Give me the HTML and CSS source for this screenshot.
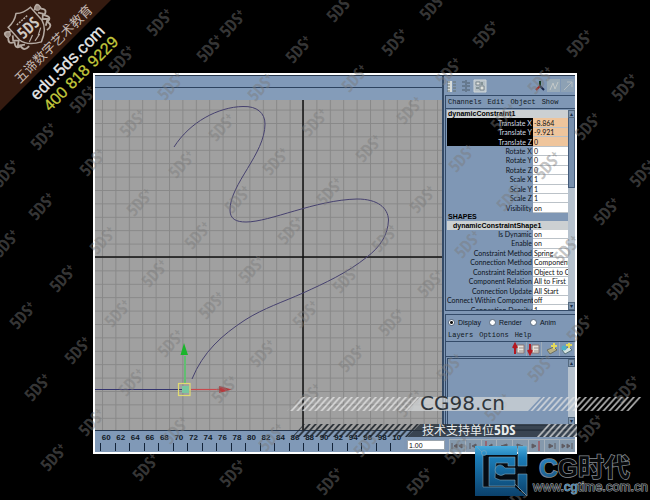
FILE: index.html
```html
<!DOCTYPE html>
<html lang="zh-CN">
<head>
<meta charset="utf-8">
<title>五谛数字艺术教育</title>
<link rel="stylesheet" href="styles.css">
</head>
<body>
<div class="stage">
  <main class="frame">
    <div class="workspace">
      <section class="view" aria-label="Viewport">
        <div class="view-menu"></div>
        <div class="view-tools"></div>
        <svg class="canvas" viewBox="95 100 347 330" preserveAspectRatio="none">
          <defs>
            <pattern id="grid" x="303" y="257" width="13.4" height="13.4" patternUnits="userSpaceOnUse">
              <path d="M.5 0V13.4M0 .5H13.4" fill="none" stroke="#828282" stroke-width="1"/>
            </pattern>
          </defs>
          <rect x="95" y="100" width="348" height="330" fill="#a0a0a0"/>
          <rect x="95" y="100" width="348" height="330" fill="url(#grid)" opacity=".8"/>
          <path d="M303 100V431" stroke="#111" stroke-width="1.500"/>
          <path d="M95 257H443" stroke="#111" stroke-width="1.500"/>
          <path d="M174 147C190 122 218 107 243 106.500C257 106 265 113 265 124C265 154 230 184 230 210C230 219 236 222 246 222C270 222 315 200 357 199C378 199 388 208 388.500 220C388 235 380 247 367 257C347 273 325 283 303 293C283 302 264 308 245 320C222 335 203 352 192 379" fill="none" stroke="#46416f" stroke-width="1"/>
          <path d="M95 389.500H184" stroke="#34346e" stroke-width="1.200"/>
          <path d="M185 356V384" stroke="#62bd72" stroke-width="2"/>
          <path d="M184 343L188 355H180.500Z" fill="#1ab52b"/>
          <path d="M191 389.500H220" stroke="#c8494c" stroke-width="1.200"/>
          <path d="M219 386L232 389.500L219 393Z" fill="#b8383c"/>
          <rect x="182" y="386" width="7" height="7" fill="#78c8a0"/>
          <rect x="178.500" y="383.500" width="11.500" height="12" fill="none" stroke="#e2dc70" stroke-width="1.200"/>
        </svg>
      </section>
      <aside class="side">
        <div class="tools">
          <svg class="tool" viewBox="0 0 14 14"><path d="M3 2H7V13H3Z" fill="#d6dbd9"/><path d="M2 3H5M2 6H5M2 9H5M2 12H5M8 3H11M8 6H11M8 9H11M8 12H11" stroke="#66706f"/></svg>
          <svg class="tool" viewBox="0 0 14 14"><path d="M3 3H6M3 7H6M3 11H6M7 1V13M8 4H11M8 7H11M8 11H11" stroke="#4f5c6b"/></svg>
          <svg class="tool" viewBox="0 0 14 14"><path d="M1 1H13V13H1Z" fill="#b4bfc6" stroke="#d0d6d8"/><path d="M3 3H7V6H3ZM7 7H11V11H7Z" fill="#dfe2de" stroke="#7b868e"/><path d="M3 9H6M9 3V6" stroke="#566"/></svg>
          <svg class="tool tool-right" viewBox="0 0 14 14"><path d="M7 2V7" stroke="#173d24" stroke-width="2"/><path d="M7 7L3 11" stroke="#a22b25" stroke-width="2"/><path d="M7 7L11 11" stroke="#17264c" stroke-width="2"/></svg>
          <svg class="tool" viewBox="0 0 14 14"><path d="M0 0H13V13H0Z" fill="#9aabb7"/><path d="M3 11L6 4L8 10L11 3" fill="none" stroke="#c2c8c8"/></svg>
          <svg class="tool" viewBox="0 0 14 14"><path d="M0 0H13V13H0Z" fill="#8da1b4"/><path d="M3 11L11 3M6 3H11V8" fill="none" stroke="#b3bcc2"/></svg>
        </div>
        <div class="panel">
          <nav class="menu"><a href="#c">Channels</a><a href="#e">Edit</a><a href="#o">Object</a><a href="#s">Show</a></nav>
          <div class="channels">
            <div class="table-clip">
              <table class="attrs">
                <colgroup><col class="label-col"><col></colgroup>
                <tbody>
                  <tr class="name"><th colspan="2">dynamicConstraint1</th></tr>
                  <tr class="picked"><th>Translate X</th><td>-8.864</td></tr>
                  <tr class="picked"><th>Translate Y</th><td>-9.921</td></tr>
                  <tr class="picked"><th>Translate Z</th><td>0</td></tr>
                  <tr><th>Rotate X</th><td>0</td></tr>
                  <tr><th>Rotate Y</th><td>0</td></tr>
                  <tr><th>Rotate Z</th><td>0</td></tr>
                  <tr><th>Scale X</th><td>1</td></tr>
                  <tr><th>Scale Y</th><td>1</td></tr>
                  <tr><th>Scale Z</th><td>1</td></tr>
                  <tr><th>Visibility</th><td>on</td></tr>
                  <tr class="heading"><th colspan="2">SHAPES</th></tr>
                  <tr class="name shape"><th colspan="2">dynamicConstraintShape1</th></tr>
                  <tr><th>Is Dynamic</th><td>on</td></tr>
                  <tr><th>Enable</th><td>on</td></tr>
                  <tr><th>Constraint Method</th><td>Spring</td></tr>
                  <tr><th>Connection Method</th><td>Component</td></tr>
                  <tr><th>Constraint Relation</th><td>Object to C</td></tr>
                  <tr><th>Component Relation</th><td>All to First</td></tr>
                  <tr><th>Connection Update</th><td>All Start</td></tr>
                  <tr><th>Connect Within Component</th><td>off</td></tr>
                  <tr><th>Connection Density</th><td>1</td></tr>
                </tbody>
              </table>
            </div>
            <div class="scroll"><span class="arrow">▴</span><span class="thumb"></span><span class="arrow end">▾</span></div>
          </div>
        </div>
        <div class="panel layers">
          <div class="modes">
            <label><input type="radio" name="mode" checked>Display</label>
            <label><input type="radio" name="mode">Render</label>
            <label><input type="radio" name="mode">Anim</label>
          </div>
          <nav class="menu"><a href="#l">Layers</a><a href="#p">Options</a><a href="#h">Help</a></nav>
          <div class="layer-tools">
            <button aria-label="Move layer up"><svg viewBox="0 0 14 14"><path d="M5 3H12V11H5Z" fill="#e6e2dc" stroke="#8b7474"/><path d="M7 6H12M7 9H12" stroke="#98908b"/><path d="M3 12V4M1 6L3 2L5 6" fill="none" stroke="#b41821" stroke-width="2"/></svg></button>
            <button aria-label="Move layer down"><svg viewBox="0 0 14 14"><path d="M5 3H12V11H5Z" fill="#e6e2dc" stroke="#8b7474"/><path d="M7 6H12M7 9H12" stroke="#98908b"/><path d="M3 2V10M1 8L3 12L5 8" fill="none" stroke="#b41821" stroke-width="2"/></svg></button>
            <button class="gap" aria-label="New layer"><svg viewBox="0 0 14 14"><path d="M2 8L9 5L12 8L5 12Z" fill="#b9b184" stroke="#6d7163"/><path d="M9 1V7M6 4H12" stroke="#e3d95a" stroke-width="2"/></svg></button>
            <button aria-label="New layer from selection"><svg viewBox="0 0 14 14"><path d="M2 8L9 5L12 8L5 12Z" fill="#d5e3df" stroke="#56727a"/><circle cx="4" cy="6" r="2.500" fill="#4db1c9"/><path d="M9 1V6M6 3H12" stroke="#e3d95a" stroke-width="2"/></svg></button>
          </div>
          <div class="layer-list"><div class="scroll"><span class="arrow">▴</span><span class="arrow end">▾</span></div></div>
        </div>
      </aside>
    </div>
    <footer class="timeline">
      <ol class="ruler" id="ruler"></ol>
      <input class="time" aria-label="Current time" value="1.00">
      <div class="transport">
        <button aria-label="Start"><svg viewBox="0 0 14 12"><path d="M2 3V9M7 4L4 6L7 8ZM12 4L9 6L12 8Z"/></svg></button>
        <button aria-label="Back"><svg viewBox="0 0 14 12"><path d="M4 3V9M10 4L6 6L10 8Z"/></svg></button>
        <button aria-label="Previous key"><svg viewBox="0 0 14 12"><path class="key" d="M4 1V11"/><path d="M10 4L7 6L10 8Z"/></svg></button>
        <button aria-label="Reverse"><svg viewBox="0 0 14 12"><path d="M10 4L4 6L10 8Z"/></svg></button>
        <button aria-label="Play"><svg viewBox="0 0 14 12"><path d="M4 4L10 6L4 8Z"/></svg></button>
        <button aria-label="Next key"><svg viewBox="0 0 14 12"><path class="key" d="M10 1V11"/><path d="M3 4L7 6L3 8Z"/></svg></button>
        <button aria-label="Forward"><svg viewBox="0 0 14 12"><path d="M10 3V9M4 4L8 6L4 8Z"/></svg></button>
        <button aria-label="End"><svg viewBox="0 0 14 12"><path d="M12 3V9M2 4L5 6L2 8ZM7 4L10 6L7 8Z"/></svg></button>
      </div>
    </footer>
  </main>

  <svg class="overlay" viewBox="0 0 650 500" preserveAspectRatio="xMinYMin meet">
    <defs>
      <pattern id="lightHatch" width="6" height="14" y="397" patternUnits="userSpaceOnUse" patternTransform="skewX(-42)"><path d="M1.500 0V14" stroke="#e4e4e4" stroke-width="2.200"/></pattern>
      <pattern id="darkHatch" width="6" height="14" y="424" patternUnits="userSpaceOnUse" patternTransform="skewX(-42)"><path d="M1.500 0V14" stroke="#20262c" stroke-width="2.200"/></pattern>
      <linearGradient id="blue" gradientUnits="userSpaceOnUse" x1="500" y1="445" x2="500" y2="496"><stop offset="0" stop-color="#4db0e0"/><stop offset=".25" stop-color="#1b7db8"/><stop offset="1" stop-color="#0b416c"/></linearGradient>
      <linearGradient id="blueText" x1="0" y1="0" x2="1" y2="1"><stop offset="0" stop-color="#2d8ed0"/><stop offset="1" stop-color="#0a2740"/></linearGradient>
    </defs>
    <g id="marks" class="mark"></g>

    <path d="M0 0H111L0 111Z" fill="#351b10"/>
    <g transform="translate(28 27) rotate(-42)" fill="none" stroke="#b5aaa2">
      <path d="M-15 -13Q-6 -13 0 -18Q6 -13 15 -13V4Q13 14 0 20Q-13 14 -15 4Z" fill="#33190f" stroke-width="1.500"/>
      <path d="M-9 12L-2 9M2 13L9 9M-4 15L4 13" stroke-width="1.200"/>
      <path d="M-16 -8Q-24 -15 -22 -5Q-27 0 -20 2Q-25 9 -18 9Q-20 16 -12 15M-17 -4L-20 0L-16 4L-20 7L-14 11M16 -8Q24 -15 22 -5Q27 0 20 2Q25 9 18 9Q20 16 12 15M17 -4L20 0L16 4L20 7L14 11" stroke-width="1.800"/>
      <circle cx="-20" cy="-8" r="2.500" fill="#9a8b82"/><circle cx="20" cy="-8" r="2.500" fill="#9a8b82"/>
      <path d="M-7 -9H7" stroke-width="1.500" stroke-dasharray="2 1"/>
    </g>
    <text class="crest" transform="translate(32 32) rotate(-42)">5DS</text>
    <text class="school" transform="translate(20 84) rotate(-45)">五谛数字艺术教育</text>
    <text class="site" transform="translate(37 101) rotate(-45)">edu.5ds.com</text>
    <text class="phone" transform="translate(50 112) rotate(-45)">400 818 9229</text>

    <path d="M300 397H420L407 411H287Z" fill="url(#lightHatch)" opacity=".85"/>
    <path d="M420 397H541L528 411H407Z" fill="#d5d8d9" opacity=".72"/>
    <path d="M543 397H642L629 411H530Z" fill="url(#lightHatch)" opacity=".8"/>
    <text class="cg98" x="420" y="410">CG98.cn</text>
    <path d="M304 424H420L407 437H292Z" fill="url(#darkHatch)"/>
    <path d="M420 424H577V437H407Z" fill="#29323b" opacity=".82"/>
    <path d="M548 424H577V437H536Z" fill="url(#lightHatch)" opacity=".8"/>
    <text class="support" x="422" y="435">技术支持单位<tspan class="support-brand">5DS</tspan></text>

    <path d="M482 455H526V489H482Z" fill="#050b12"/>
    <g fill="url(#blue)" stroke="#88a9b8" stroke-opacity=".7" stroke-width=".8">
      <path d="M475 446H517V455H483V487H515L526 496H475Z" stroke="none"/>
      <path d="M483 455V487H515" fill="none"/>
      <path d="M518 446H527V466H518Z"/>
      <path d="M518 474H527V496L518 487Z"/>
      <path d="M489 457H515V466H508V463H496L495 478L500 480H515V486H489Z"/>
      <path d="M505 468H515V474H505Q501 477 497 474Q493 470 497 466Q501 463 505 468Z"/>
      <path d="M477 447L483 453M515 484L526 495" fill="none"/>
      <circle cx="484" cy="453" r="2.500"/>
    </g>
    <text class="brand" x="539" y="477"><tspan fill="url(#blueText)">C</tspan>G时代</text>
    <text class="brand-url" x="533" y="491">www.<tspan fill="#3d85b3">cg</tspan>time.com.cn</text>
  </svg>
</div>
<script src="script.js"></script>
</body>
</html>
```

FILE: styles.css
```css
* { box-sizing: border-box; }
body { margin: 0; background: #000; font-family: "Liberation Sans", "Noto Sans CJK SC", sans-serif; }
.stage { position: relative; min-height: 100vh; overflow: hidden; padding: 73px 73px 45px 93px; }
.frame { border: 2px solid #fff; background: #7f97b5; }
.workspace { display: grid; grid-template-columns: 1fr 133px; border-top: 1px solid #26364b; }
.view { display: flex; flex-direction: column; }
.view-menu { height: 12px; border-bottom: 1px solid #2d435f; background: #8099b8; }
.view-tools { height: 12px; background: #849cb9; }
.canvas { display: block; width: 100%; height: 330px; }

.side { display: flex; flex-direction: column; border-left: 2px solid #344a66; padding-left: 1px; color: #0c131c; }
.tools { display: flex; align-items: center; height: 19px; }
.tool { width: 14px; height: 14px; }
.tool-right { margin-left: auto; }
.panel { border: 1px solid #344b69; border-width: 1px 0 1px 1px; }
.menu { display: flex; align-items: center; gap: 6px; height: 12px; padding-left: 2px; }
.menu a { color: #101822; font: 7px "Liberation Mono", monospace; text-decoration: none; }
.channels { display: flex; height: 202px; border-top: 1px solid #344b69; padding: 1px 0 0 1px; }
.table-clip { flex: 1; height: 200px; overflow: hidden; }
.attrs { width: 100%; height: 205px; table-layout: fixed; border-collapse: collapse; font: 7px/8px Lato, "Liberation Sans", sans-serif; }
.label-col { width: 71%; }
.attrs th, .attrs td { overflow: hidden; padding: 0 1px 0 0; white-space: nowrap; }
.attrs th { font-weight: 400; text-align: right; }
.attrs td { padding: 0 0 0 1px; border-bottom: 1px solid #bbc2c8; background: #fff; color: #111; text-align: left; }
.attrs .name th, .attrs .heading th { padding-left: 1px; font: 700 7px/8px "Liberation Sans", sans-serif; text-align: left; color: #000; }
.attrs .name th { background: #ccd0d2; }
.attrs .shape th { padding-left: 6px; }
.attrs .picked th { background: #000; color: #d2dae2; }
.attrs .picked td { background: #efc59c; }
.scroll { display: flex; flex-direction: column; width: 7px; background: #b6c2ce; }
.arrow { height: 8px; background: #8097b2; border: 1px solid #54697f; color: #1d2f46; font: 6px/6px "DejaVu Sans", sans-serif; text-align: center; }
.thumb { height: 70px; background: #7890ae; border: 1px solid #425a79; border-top: 0; }
.end { margin-top: auto; }

.layers { display: flex; flex-direction: column; flex: 1; margin-top: 3px; }
.modes { display: flex; align-items: center; gap: 8px; height: 14px; padding-left: 2px; font: 7px "Liberation Sans", sans-serif; }
.modes label { display: flex; align-items: center; gap: 3px; }
.modes input { appearance: none; width: 7px; height: 7px; margin: 0; border: 1px solid #59697d; border-radius: 50%; background: #fff; }
.modes input:checked { background: radial-gradient(circle, #111 0 1px, #fff 2px); }
.layer-tools { display: flex; justify-content: flex-end; height: 16px; border: 1px solid #344b69; border-width: 1px 0; }
.layer-tools button { width: 15px; padding: 0; border: 1px solid #9cabb9; border-width: 0 1px 0 0; background: transparent; }
.layer-tools svg { display: block; width: 14px; height: 14px; }
.layer-tools .gap { margin-left: 3px; }
.layer-list { display: flex; flex: 1; justify-content: flex-end; margin: 1px 0 3px 1px; border: 1px solid #344b69; border-right: 0; }

.timeline { display: flex; align-items: stretch; height: 22px; border-top: 1px solid #24364d; }
.ruler { display: grid; grid-template-columns: repeat(21, 1fr); flex: 1; margin: 0; padding: 1px 0 0 4px; list-style: none; overflow: hidden; background: #8099b7; }
.ruler li { display: flex; flex-direction: column; align-items: center; color: #111a26; font: 700 8px/11px "Liberation Sans", sans-serif; }
.ruler li::after { content: ""; align-self: flex-start; width: 1px; height: 8px; margin-left: 1px; background: #13243a; }
.time { width: 38px; height: 10px; margin: 9px 4px 0 3px; padding: 0 1px; border: 1px solid #9aa4ad; background: #fff; color: #111; font: 7px "Liberation Sans", sans-serif; }
.transport { display: grid; grid-template-columns: repeat(8, 1fr); width: 126px; padding-top: 8px; }
.transport button { padding: 0; border: 1px solid #a6b1bb; border-width: 1px 0 0 1px; background: #8599ac; }
.transport svg { display: block; width: 14px; height: 12px; fill: #5f5b60; stroke: #5f5c62; }
.transport .key { stroke: #a7363d; }

.overlay { position: absolute; left: 0; top: 0; width: 650px; height: 500px; pointer-events: none; }
.mark { fill: #7b7b7b; fill-opacity: .46; font: 700 17px "Open Sans Condensed", "DejaVu Sans Condensed", sans-serif; text-anchor: middle; }
.plus { font-size: 13px; }
.crest { fill: #d0c8c2; font: 700 16px "Open Sans Condensed", "Liberation Sans", sans-serif; text-anchor: middle; }
.school { fill: #c4b8b0; font: 13px "Noto Sans CJK SC", sans-serif; }
.site { fill: #e9e9e9; font: 17px "Liberation Sans", sans-serif; stroke: #e9e9e9; stroke-width: .3; }
.phone { fill: #c3c83c; font: 16px "Liberation Sans", sans-serif; stroke: #c3c83c; stroke-width: .3; }
.cg98 { fill: #30363c; font: 20px "DejaVu Sans", sans-serif; }
.support { fill: #e9eced; font: 12px "Noto Sans CJK SC", sans-serif; }
.support-brand { font: 700 15px "Open Sans Condensed", "Liberation Sans", sans-serif; }
.brand { fill: #080a0c; stroke: #858b90; stroke-width: 1.5px; paint-order: stroke; font: 700 26px "Liberation Sans", "Noto Sans CJK SC", sans-serif; }
.brand-url { fill: #20262b; stroke: #a3a8ab; stroke-width: 1px; paint-order: stroke; font: 13px "Liberation Sans", sans-serif; }
```

FILE: script.js
```js
const marks = [
  [160,22],[233,23],[340,8],[433,6],[210,48],[299,49],[395,42],[486,34],[580,43],[122,59],
  [83,99],[171,86],[261,87],[355,78],[449,71],[541,80],[625,87],[44,136],[588,126],[6,173],
  [133,123],[222,127],[315,122],[410,110],[504,117],[93,162],[182,164],[276,161],[369,148],[462,158],[548,165],[643,173],
  [42,206],[140,202],[238,199],[330,191],[423,199],[510,197],[607,211],[6,243],[103,240],[198,235],[291,230],[385,238],[468,244],[567,249],
  [63,278],[155,273],[252,269],[346,279],[431,283],[620,286],[23,315],[118,313],[212,305],[306,314],[392,322],[580,328],
  [78,350],[171,343],[263,353],[352,358],[450,367],[541,368],[38,387],[132,382],[225,389],[309,397],[627,389],
  [92,422],[176,430],[410,403],[498,407],[272,437],[367,443],[591,428],[54,457],[146,467],[233,473],[330,481],[420,481],[458,450],[518,497]
];
const ns = "http://www.w3.org/2000/svg";
const layer = document.getElementById("marks");
for (const [x, y] of marks) {
  const text = document.createElementNS(ns, "text");
  text.setAttribute("transform", `translate(${x} ${y}) rotate(-48)`);
  text.setAttribute("y", 6);
  text.textContent = "5DS";
  const plus = document.createElementNS(ns, "tspan");
  plus.setAttribute("class", "plus");
  plus.setAttribute("dy", -4);
  plus.textContent = "+";
  text.append(plus);
  layer.append(text);
}

const ruler = document.getElementById("ruler");
for (let frame = 60; frame <= 100; frame += 2) {
  const item = document.createElement("li");
  item.textContent = frame === 100 ? "10" : frame;
  ruler.append(item);
}
```
